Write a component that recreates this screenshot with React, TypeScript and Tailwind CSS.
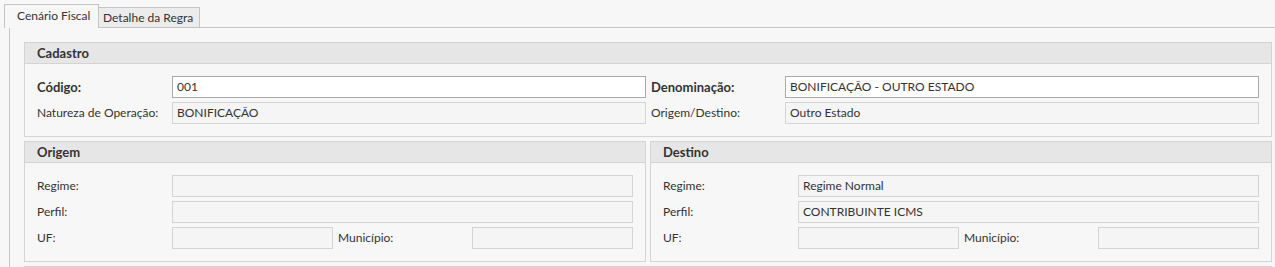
import type { ReactNode } from "react";

const font = { fontFamily: "Lato, 'Open Sans', sans-serif" };

function Box({ title, children, className = "" }: { title: string; children?: ReactNode; className?: string }) {
  return (
    <div className={`border border-[#d4d4d4] bg-[#f7f7f7] ${className}`}>
      <div className="h-[21px] border-b border-[#d4d4d4] bg-[#e6e6e6] pl-[12px] text-[13px] leading-[21px] font-bold text-[#333]">
        {title}
      </div>
      <div className="px-[12px] pt-[12px] pb-[12px]">{children}</div>
    </div>
  );
}

function Field({ value = "", editable = false }: { value?: string; editable?: boolean }) {
  return (
    <div
      className={`h-[22px] border pl-[4px] text-[12px] leading-[20px] text-[#333] whitespace-nowrap overflow-hidden ${
        editable ? "border-[#aaaaaa] bg-white" : "border-[#d4d4d4] bg-[#f5f5f5]"
      }`}
    >
      {value}
    </div>
  );
}

function Label({ children, bold = false, className = "" }: { children: ReactNode; bold?: boolean; className?: string }) {
  return (
    <div
      className={`h-[22px] leading-[22px] text-[#333] whitespace-nowrap ${
        bold ? "text-[13px] font-bold" : "text-[12px]"
      } ${className}`}
    >
      {children}
    </div>
  );
}

function PartyBox({ title, regime, perfil }: { title: string; regime: string; perfil: string }) {
  return (
    <Box title={title} className="flex-1">
      <div className="grid grid-cols-[135px_1fr] gap-y-[4px]">
        <Label>Regime:</Label>
        <Field value={regime} />
        <Label>Perfil:</Label>
        <Field value={perfil} />
        <Label>UF:</Label>
        <div className="grid grid-cols-[1fr_139px_1fr]">
          <Field />
          <Label className="pl-[5px]">Município:</Label>
          <Field />
        </div>
      </div>
    </Box>
  );
}

export default function App() {
  return (
    <div className="w-[1275px] h-[267px] overflow-hidden bg-[#f7f7f7] pt-[4px] pl-[4px]" style={font}>
      {/* Tabs */}
      <div className="flex items-end h-[24px] relative z-10">
        <div className="w-[95px] h-[24px] border border-b-0 border-[#c4c4c4] bg-[#f7f7f7] pl-[12px] text-[12px] leading-[22px] text-[#333]">
          Cenário Fiscal
        </div>
        <div className="w-[101px] h-[21px] border border-l-0 border-[#c4c4c4] bg-[#ececec] pl-[4px] text-[12px] leading-[20px] text-[#333]">
          Detalhe da Regra
        </div>
      </div>

      {/* Panel */}
      <div className="ml-[5px] -mt-px border-l border-t border-[#c4c4c4] pl-[14px] pr-[3px] pt-[14px] flex flex-col gap-[4px]">
        <Box title="Cadastro">
          <div className="grid grid-cols-[135px_1fr_139px_1fr] gap-y-[4px]">
            <Label bold>Código:</Label>
            <Field value="001" editable />
            <Label bold className="pl-[5px]">Denominação:</Label>
            <Field value="BONIFICAÇÃO - OUTRO ESTADO" editable />
            <Label>Natureza de Operação:</Label>
            <Field value="BONIFICAÇÃO" />
            <Label className="pl-[5px]">Origem/Destino:</Label>
            <Field value="Outro Estado" />
          </div>
        </Box>

        <div className="flex gap-[4px]">
          <PartyBox title="Origem" regime="" perfil="" />
          <PartyBox title="Destino" regime="Regime Normal" perfil="CONTRIBUINTE ICMS" />
        </div>

        {/* next section, cut off by the window */}
        <Box title="" />
      </div>
    </div>
  );
}
